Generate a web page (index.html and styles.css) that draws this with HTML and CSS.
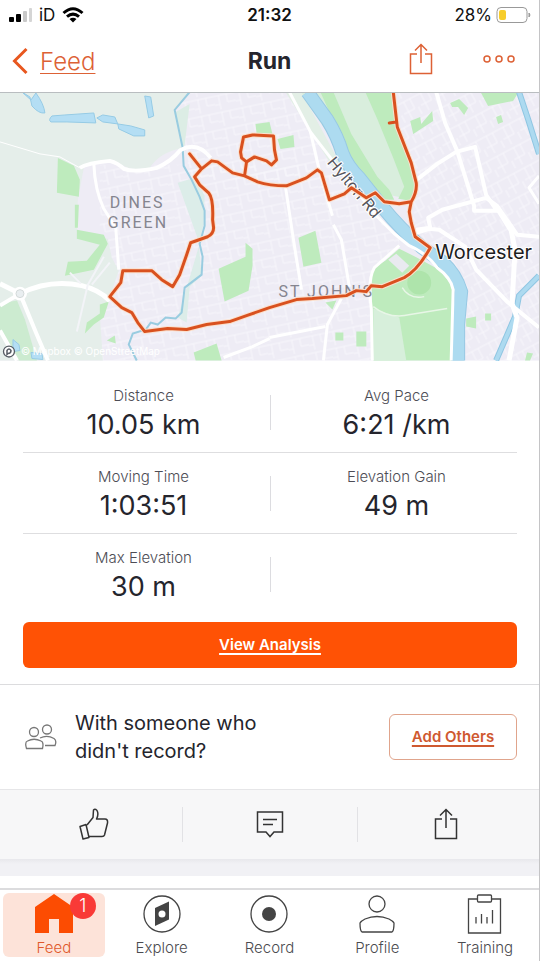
FILE: index.html
```html
<!DOCTYPE html>
<html lang="en">
<head>
  <meta charset="UTF-8" />
  <meta name="viewport" content="width=device-width, initial-scale=1.0" />
  <title>Run</title>
  <link rel="stylesheet" href="styles.css">
</head>
<body>
  <div class="app">
    <!-- Status bar -->
    <div class="status-bar">
      <div class="status-left">
        <svg width="24" height="16" viewBox="0 0 24 16">
          <rect x="1" y="10" width="5" height="5" rx="1" fill="#000" />
          <rect x="8" y="7" width="5" height="8" rx="1" fill="#000" />
          <rect x="15" y="4" width="4" height="11" rx="1" fill="#c9c9c9" />
          <rect x="21" y="1" width="3" height="14" rx="1" fill="#d5d5d5" />
        </svg>
        <span>iD</span>
        <svg width="22" height="16" viewBox="0 0 22 16" fill="none" stroke="#000" stroke-width="3">
          <path d="M1.500 6Q11-2.500 20.500 6" />
          <path d="M5 9.700Q11 4.500 17 9.700" />
          <path d="M11 15.500L7.500 12Q11 9.500 14.500 12Z" fill="#000" stroke="none" />
        </svg>
      </div>
      <div class="status-time">21:32</div>
      <div class="status-right">
        <span>28%</span>
        <svg width="35" height="18" viewBox="0 0 35 18">
          <rect x="1" y="1.500" width="30" height="15" rx="4" fill="#fff" stroke="#999" />
          <rect x="3" y="4" width="7" height="10" rx="2" fill="#f7cd2b" />
          <path d="M33 7q2 2 0 4z" fill="#999" stroke="#999" />
        </svg>
      </div>
    </div>

    <!-- Nav -->
    <header class="nav">
      <a class="back" href="#">
        <svg width="16" height="28" viewBox="0 0 16 28" fill="none" stroke="#e8571f" stroke-width="3">
          <path d="M14.500 2L2.500 14L14.500 26" />
        </svg>
        <span>Feed</span>
      </a>
      <h1>Run</h1>
      <div class="nav-actions">
        <button aria-label="Share">
          <svg width="24" height="32" viewBox="0 0 24 32" fill="none" stroke="#dd6135" stroke-width="1.500">
            <path d="M8 11H1.500V30.500H22.500V11H16M12 20V1.500M6 7.500L12 1.500L18 7.500" />
          </svg>
        </button>
        <button aria-label="More">
          <svg width="32" height="10" viewBox="0 0 32 10" fill="none" stroke="#dd6135" stroke-width="1.500">
            <circle cx="4" cy="5" r="3" />
            <circle cx="16" cy="5" r="3" />
            <circle cx="28" cy="5" r="3" />
          </svg>
        </button>
      </div>
    </header>

    <!-- Map -->
    <svg class="map" viewBox="0 92 540 269" role="img" aria-label="Route map">
      <defs>
        <pattern id="streets-a" width="21" height="17" patternUnits="userSpaceOnUse" patternTransform="rotate(-12)">
          <path d="M0 3H21M5 3V17M13 3V11H21M0 12H5" fill="none" stroke="#f7f6fb" stroke-width="1" />
        </pattern>
        <pattern id="streets-b" width="19" height="23" patternUnits="userSpaceOnUse" patternTransform="rotate(-28)">
          <path d="M0 4H19M0 15H12M5 4V23M12 4V15M16 15V23" fill="none" stroke="#f7f6fb" stroke-width="1" />
        </pattern>
      </defs>
      <rect y="92" width="540" height="269" fill="#eeecf5" />
      <path d="M100 165H330L400 240V361H100Z" fill="url(#streets-a)" />
      <path d="M180 92H300L340 165V180H190Z" fill="url(#streets-a)" />
      <path d="M394 92H540V361H468L440 255L412 225Z" fill="url(#streets-b)" />

      <!-- countryside -->
      <path d="M0 92H190L175 110L183 148Q160 152 150 168Q130 171 124 166Q104 158 84 168L78 200L77 235L108 239L112 258L119 271L110 297L100 314L103 361H0Z" fill="#e5eeea" />
      <path d="M176 112L190 104L185 145L183 148Z" fill="#dcede5" />
      <path d="M178 183L195 178L205 196L204 225L199 243L202 276L190 287L187 323L178 318L187 288L200 244Z" fill="#dcede9" />
      <path d="M300 92H380L413 200L365 190L340 150Z" fill="#d9eedd" />
      <path d="M286 92H302L345 172L335 170L310 130Z" fill="#e3efe6" />

      <!-- parks -->
      <g fill="#beebbd">
        <path d="M58 158L74 166L80 180L79 197L57 193Z" />
        <path d="M77 230L104 235L108 244L94 270L65 276L68 262L87 261L100 245L77 239Z" />
        <path d="M100 305L109 302L104 318L94 325L85 334L87 323L100 314Z" />
        <path d="M75 205L79 205L78 228L75 228ZM107 341L115 336L116 344Z" />
        <path d="M321 92H334L352 134L378 177L390 190L395 200L382 200L353 162L338 130Z" />
        <path d="M366 92H393L398 127L414 174L416 190L411 201L399 199L405 187L394 158L378 119Z" />
        <path d="M256 124L270 122L273 134L257 133ZM278 139L294 135L295 147L281 149Z" />
        <path d="M411 121L421 117L422 124L433 111L434 121L414 134Z" />
        <path d="M451 103L460 99L469 108L465 115L459 107L453 107ZM497 117L502 115L504 122L499 124Z" />
        <path d="M482 93H519L514 101L489 106Z" />
        <path d="M219 269L246 257L246 243L253 249V266L249 291L225 302Z" />
        <path d="M299 238L316 231L322 263L304 267ZM194 353L217 344L222 361H196Z" />
        <path d="M372 276Q374 267 386 261L400 249L418 258L440 270L453 286L455 316L453 361H374Z" />
        <path d="M326 303L337 301L333 310ZM336 333H344V341H336ZM357 332H367V347H357ZM467 319L477 317L477 329L467 327ZM486 314L492 314V321H486ZM528 353L534 354L531 361H526Z" />
        <path d="M0 304L17 301L25 320L37 361H19L0 331Z" fill="#ccebd0" />
      </g>
      <circle cx="420" cy="283" r="12" fill="#aee4ab" />
      <path d="M374 309L400 318L407 361H374Z" fill="#d7efdb" />
      <path d="M389 260L397 254L410 266L403 273Z" fill="#e9eaf0" />
      <path d="M403 288Q410 300 425 297M374 307Q390 320 411 315L448 309" fill="none" stroke="#e8f6e7" stroke-width="1.500" />

      <!-- ponds -->
      <g fill="#b4def4" stroke="#96cbe5" stroke-width="1">
        <path d="M22 92L31 100L36 93Q44 104 45 113Q39 114 32 106L30 97Z" />
        <path d="M52 116L65 115L94 113L96 123L67 122L51 122Q48 120 52 116Z" />
        <path d="M97 118L103 115L115 117L118 124L103 122Z" />
        <path d="M118 124L131 126L145 130L145 136L134 136L119 129Z" />
        <path d="M145 96L151 97L154 116L149 118Z" />
        <path d="M13 340L19 345L20 351L13 352ZM31 353L42 354L43 360L32 359Z" />
      </g>

      <!-- brooks -->
      <path d="M190 92L175 110L183 148L184 166L192 180L200 197L205 211L205 226L200 244L203 257L202 275L185 288L182 313L176 319L166 318L158 325L151 323L146 330M146 330L133 334L129 345L137 361" fill="none" stroke="#99cce0" stroke-width="2" />
      <path d="M520 92L529 119L540 154M540 276L520 296L516 317L497 361" fill="none" stroke="#8fc6e2" stroke-width="6" />
      <path d="M520 92L529 119L540 154M540 276L520 296L516 317L497 361" fill="none" stroke="#addaf0" stroke-width="4" />

      <!-- river -->
      <path d="M308 92L328 120Q338 136 343 153Q348 166 360 178L383 207Q400 228 423 248L443 262Q457 275 462 292L459 325V361" fill="none" stroke="#98c9e4" stroke-width="14" />
      <path d="M308 92L328 120Q338 136 343 153Q348 166 360 178L383 207Q400 228 423 248L443 262Q457 275 462 292L459 325V361" fill="none" stroke="#addbf0" stroke-width="12" />

      <!-- roads -->
      <g fill="none" stroke="#fff" stroke-linejoin="round">
        <path d="M80 168Q88 163 110 161Q118 163 124 169Q135 173 157 168Q171 162 181 150Q198 141 211 158" stroke-width="4" />
        <path d="M0 142L40 154L60 157L80 168" stroke-width="1" />
        <path d="M94 164Q95 190 104 209L116 228L119 270" stroke-width="3" />
        <path d="M0 284L20 294Q50 279 82 286Q99 290 110 301" stroke-width="5" />
        <path d="M0 306L20 294L36 333L48 361M0 331L17 361" stroke-width="4" />
        <path d="M290 92L311 132L349 181L377 216L395 234L410 246Q428 254 438 268Q452 278 454 290L452 361" stroke-width="3" />
        <path d="M311 132L320 171L333 216M334 225L342 240L350 287" stroke-width="3" />
        <path d="M286 187L294 240L302 290M342 299L328 325L324 361M400 246L375 268Q368 280 372 309L373 361" stroke-width="3" />
        <path d="M437 92L446 123L458 151L475 206L475 211H498L487 195L476 147L457 152L438 164L416 181" stroke-width="4" />
        <path d="M417 230L431 228L429 218L443 210L487 198L498 206L518 235L540 237M498 209L511 230M417 233L430 229L440 230L466 247L477 270L508 302L540 328" stroke-width="4" />
        <path d="M511 225L516 250L513 304L518 318L510 361" stroke-width="5" />
        <path d="M270 338L326 327M224 358L253 347L270 339M540 176L530 188L540 204" stroke-width="3" />
        <path d="M104 257L88 285L77 332M92 285L110 263M70 273L81 284" stroke="#f3f4f8" stroke-width="2" />
      </g>
      <circle cx="20" cy="294" r="7" fill="#fff" />
      <circle cx="20" cy="294" r="4" fill="#e9eef0" stroke="#d3d9d9" stroke-width="1" />

      <g class="map-label">
        <text x="110" y="208">DINES</text>
        <text x="108" y="228">GREEN</text>
        <text x="279" y="297">ST JOHN'S</text>
      </g>
      <text class="map-road" transform="translate(327 163) rotate(50)">Hylton Rd</text>

      <!-- route -->
      <g fill="none" stroke-linejoin="round" stroke-linecap="round">
        <path class="route-glow" d="M190 154L202 169L195 177L200 185L209 193Q214 199 213 220L214 228Q214 234 208 237L191 243L187 255L180 275L173 287L162 280L152 271H123L121 283L110 297L122 308L132 313L138 323L145 332L168 329L187 330L207 325L230 322L247 316L270 308L297 300L313 299L347 296L357 291L367 292L372 286L383 287L405 278Q419 270 431 248L416 237L412 223L410 212L412 202Q418 192 417 183L412 163L398 127L394 92M202 169L212 161L218 162L233 173L245 176L258 182Q270 186 287 186L307 178L318 170L322 173L330 200L345 194L352 188L367 198L376 193L385 202L400 204L412 202M245 176L247 162L242 158L241 152L244 137L253 135L274 136L275 150L277 160L272 165L267 161L255 157L247 162" />
        <path class="route" d="M190 154L202 169L195 177L200 185L209 193Q214 199 213 220L214 228Q214 234 208 237L191 243L187 255L180 275L173 287L162 280L152 271H123L121 283L110 297L122 308L132 313L138 323L145 332L168 329L187 330L207 325L230 322L247 316L270 308L297 300L313 299L347 296L357 291L367 292L372 286L383 287L405 278Q419 270 431 248L416 237L412 223L410 212L412 202Q418 192 417 183L412 163L398 127L394 92M390 123L397 122M202 169L212 161L218 162L233 173L245 176L258 182Q270 186 287 186L307 178L318 170L322 173L330 200L345 194L352 188L367 198L376 193L385 202L400 204L412 202M245 176L247 162L242 158L241 152L244 137L253 135L274 136L275 150L277 160L272 165L267 161L255 157L247 162" />
      </g>
      <text class="map-city" x="436" y="259">Worcester</text>
      <circle cx="9" cy="352" r="5.500" fill="#fff" stroke="#565c64" stroke-width="1.300" />
      <path d="M7 355V351Q9 348 11 351Q11 354 8 354Z" fill="#fff" stroke="#565c64" stroke-width="1.500" />
      <text class="map-credit" x="21" y="356">© Mapbox © OpenStreetMap</text>
      <path d="M0 92.500H540" stroke="#b9bdc0" />
    </svg>

    <!-- Stats -->
    <section class="stats">
      <div class="stat-row">
        <div class="stat"><span class="label">Distance</span><span class="value">10.05 km</span></div>
        <div class="divider"></div>
        <div class="stat"><span class="label">Avg Pace</span><span class="value">6:21 /km</span></div>
      </div>
      <div class="stat-row">
        <div class="stat"><span class="label">Moving Time</span><span class="value">1:03:51</span></div>
        <div class="divider"></div>
        <div class="stat"><span class="label">Elevation Gain</span><span class="value">49 m</span></div>
      </div>
      <div class="stat-row">
        <div class="stat"><span class="label">Max Elevation</span><span class="value">30 m</span></div>
        <div class="divider"></div>
      </div>
      <button class="analysis">View Analysis</button>
    </section>

    <!-- Add others -->
    <section class="others">
      <svg width="32" height="26" viewBox="0 0 32 26" fill="none" stroke="#777" stroke-width="1.300">
        <circle cx="9" cy="8" r="4.500" />
        <circle cx="22" cy="5.500" r="4.500" />
        <path d="M1.500 24.500Q-.5 18 2.500 17Q9 13.500 16 17Q19 18 17.500 24.500Z" />
        <path d="M15 14Q22 10.500 29 14.500Q32 16.500 30 21.500H20" />
      </svg>
      <p>With someone who didn't record?</p>
      <button class="add">Add Others</button>
    </section>

    <div class="actions">
      <button aria-label="Give kudos">
        <svg width="30" height="32" viewBox="0 0 30 32" fill="none" stroke="#333" stroke-width="1.500" stroke-linejoin="round">
          <path d="M1 18.500L7 16.500L10 29.500L4 31Z" />
          <path d="M8 17L14 9.500L14.500 2Q16 .5 18 2.500Q20 6 17.500 11H26Q29 11 28.500 15L25.500 27Q25 28.500 23 28.500H10" />
        </svg>
      </button>
      <button aria-label="Comment">
        <svg width="28" height="28" viewBox="0 0 28 28" fill="none" stroke="#333" stroke-width="1.500">
          <path d="M1.500 2H26.500V22H18L14 26.500L10 22H1.500ZM7 9.500H21M7 14.500H17" />
        </svg>
      </button>
      <button aria-label="Share activity">
        <svg width="24" height="32" viewBox="0 0 24 32" fill="none" stroke="#333" stroke-width="1.500">
          <path d="M8 11H1.500V30.500H22.500V11H16M12 20V1.500M6 7.500L12 1.500L18 7.500" />
        </svg>
      </button>
    </div>

    <div class="gap"></div>

    <!-- Tab bar -->
    <nav class="tabs">
      <a class="tab active" href="#">
        <span class="tab-icon">
          <svg width="40" height="40" viewBox="0 0 40 40">
            <path d="M20 0L39 13V39H25V25H15V39H1V13Z" fill="#fc4c02" />
          </svg>
          <span class="badge">1</span>
        </span>
        <span>Feed</span>
      </a>
      <a class="tab" href="#">
        <svg width="40" height="40" viewBox="0 0 40 40">
          <circle cx="20" cy="20" r="18" fill="none" stroke="#444" stroke-width="1.300" />
          <path d="M13 14L27 7.500V25.500L13 32Z" fill="#444" />
          <circle cx="20" cy="20" r="3.500" fill="#fff" />
        </svg>
        <span>Explore</span>
      </a>
      <a class="tab" href="#">
        <svg width="40" height="40" viewBox="0 0 40 40">
          <circle cx="20" cy="20" r="18" fill="none" stroke="#444" stroke-width="1.300" />
          <circle cx="20" cy="20" r="7" fill="#444" />
        </svg>
        <span>Record</span>
      </a>
      <a class="tab" href="#">
        <svg width="40" height="40" viewBox="0 0 40 40" fill="none" stroke="#444" stroke-width="1.300">
          <circle cx="20" cy="10" r="8" />
          <path d="M5 38Q3 37 3 29Q4 27 8 25Q20 20 32 25Q36 27 37 29Q37 37 35 38Z" />
        </svg>
        <span>Profile</span>
      </a>
      <a class="tab" href="#">
        <svg width="40" height="40" viewBox="0 0 40 40" fill="none" stroke="#444" stroke-width="1.300">
          <path d="M12.500 5H3.500V39H35.500V5H26.500" />
          <rect x="12.500" y="1" width="14" height="7" rx="1" />
          <path d="M11 23V29.500M16.500 20V29.500M22 23V29.500M27.500 16V29.500" />
        </svg>
        <span>Training</span>
      </a>
    </nav>
  </div>
</body>
</html>
```
FILE: styles.css
```css
* {
  box-sizing: border-box;
}

body {
  margin: 0;
  background: #fff;
  color: #25252d;
  font-family: Inter, "Liberation Sans", sans-serif;
}

button {
  padding: 0;
  border: none;
  background: none;
  font-family: inherit;
  cursor: pointer;
}

a {
  color: inherit;
  text-decoration: none;
}

svg {
  display: block;
  flex-shrink: 0;
}

.app {
  border-right: 1px solid #c4c4c6;
  border-bottom: 1px solid #000;
}

.status-bar {
  display: grid;
  grid-template-columns: 1fr auto 1fr;
  align-items: center;
  height: 30px;
  padding: 0 8px;
  color: #111;
  font-size: 17px;
}

.status-left,
.status-right {
  display: flex;
  align-items: center;
  gap: 7px;
}

.status-right {
  justify-content: flex-end;
  gap: 4px;
}

.status-time {
  font-weight: 600;
}

.nav {
  display: grid;
  grid-template-columns: 1fr auto 1fr;
  align-items: center;
  height: 62px;
  padding: 0 24px 0 12px;
}

.back {
  display: flex;
  align-items: center;
  gap: 12px;
  color: #dd6135;
  font-size: 24px;
  font-weight: 300;
}

.back span {
  text-decoration: underline;
  text-decoration-thickness: 1px;
  text-underline-offset: 3px;
}

.nav h1 {
  margin: 0;
  padding-left: 12px;
  font-size: 23px;
  font-weight: 700;
}

.nav-actions {
  display: flex;
  justify-content: flex-end;
  align-items: center;
  gap: 50px;
  padding-bottom: 4px;
}

.map {
  width: 100%;
  height: auto;
}

.map-label {
  fill: #85858f;
  font-family: Roboto, sans-serif;
  font-size: 16px;
  letter-spacing: 2px;
}

.map-road {
  fill: #55555c;
  stroke: #fff;
  stroke-width: 2px;
  paint-order: stroke;
  font-size: 16px;
}

.map-city {
  fill: #1d1d20;
  stroke: #fff;
  stroke-width: 2px;
  paint-order: stroke;
  font-size: 20px;
}

.map-credit {
  fill: #fff;
  font-size: 10px;
}

.route-glow {
  stroke: #fbe0cd;
  stroke-width: 5px;
}

.route {
  stroke: #d9511f;
  stroke-width: 3px;
}

.stats {
  padding: 11px 22px 16px 23px;
  border-bottom: 1px solid #dcdcde;
}

.stat-row {
  display: grid;
  grid-template-columns: 1fr 12px 1fr;
  height: 81px;
  padding-top: 13px;
  border-bottom: 1px solid #dedee0;
}

.stat-row:nth-child(3) {
  border-bottom: none;
}

.stat {
  display: flex;
  flex-direction: column;
  align-items: center;
}

.label {
  color: #4d4d55;
  font-size: 15px;
  font-weight: 300;
  line-height: 22px;
}

.value {
  font-size: 27px;
  line-height: 36px;
}

.divider {
  justify-self: center;
  width: 1px;
  height: 35px;
  margin-top: 10px;
  background: #dcdce0;
}

.analysis {
  width: 100%;
  height: 46px;
  margin-top: 7px;
  border-radius: 6px;
  background: #ff5205;
  color: #fff;
  font-size: 15px;
  font-weight: 600;
  text-decoration: underline;
  text-decoration-thickness: 2px;
  text-underline-offset: 3px;
}

.others {
  display: flex;
  align-items: center;
  height: 104px;
  padding: 0 22px 0 25px;
}

.others p {
  flex: 1;
  max-width: 220px;
  margin: 0 auto 0 18px;
  font-size: 20px;
  line-height: 28px;
}

.add {
  width: 128px;
  height: 46px;
  border: 1px solid #e0a48c;
  border-radius: 6px;
  color: #cf5930;
  font-size: 15px;
  font-weight: 600;
  text-decoration: underline;
  text-decoration-thickness: 2px;
  text-underline-offset: 3px;
}

.actions {
  display: grid;
  grid-template-columns: repeat(3, 1fr);
  align-items: center;
  height: 70px;
  padding: 0 6px;
  border-top: 1px solid #e6e6e8;
  background: #f7f7f8;
}

.actions button {
  display: flex;
  justify-content: center;
  align-items: center;
  height: 35px;
}

.actions button + button {
  border-left: 1px solid #e2e2e5;
}

.gap {
  height: 17px;
  background: linear-gradient(#e8e8ec, #f1f1f5 5px);
}

.tabs {
  display: grid;
  grid-template-columns: repeat(5, 1fr);
  margin-top: 12px;
  padding: 3px 0 4px;
  border-top: 2px solid #dcdcde;
}

.tab {
  display: flex;
  flex-direction: column;
  align-items: center;
  gap: 5px;
  height: 64px;
  margin: 0 3px;
  padding-top: 1px;
  border-radius: 6px;
  color: #4b4b50;
  font-size: 15px;
  font-weight: 300;
  line-height: 18px;
}

.tab.active {
  background: #fde3d9;
  color: #e0592b;
}

.tab-icon {
  position: relative;
}

.badge {
  position: absolute;
  top: -1px;
  right: -22px;
  width: 26px;
  height: 26px;
  border-radius: 50%;
  background: #f93a37;
  color: #fff;
  font-size: 18px;
  line-height: 26px;
  text-align: center;
}
```
